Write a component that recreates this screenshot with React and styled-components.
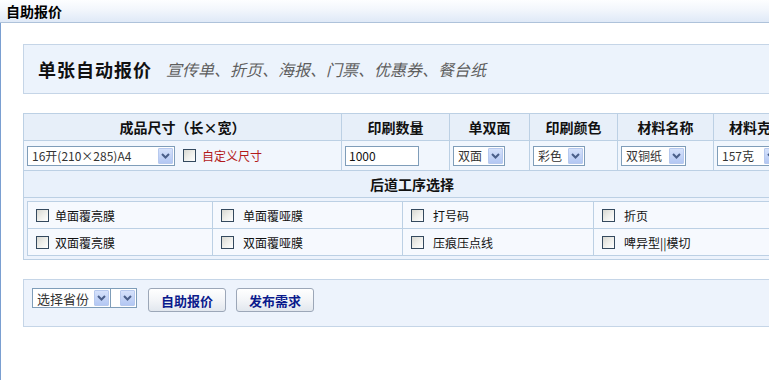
import React from "react";
import styled, { createGlobalStyle } from "styled-components";

const FONT = `"SimSun", "Noto Sans CJK SC", "Liberation Sans", sans-serif`;

const GlobalStyle = createGlobalStyle`
  html, body {
    margin: 0;
    padding: 0;
    background: #ffffff;
    overflow: hidden;
  }
  body {
    font-family: ${FONT};
    font-size: 12px;
    color: #222;
  }
`;

const Page = styled.div`
  width: 830px;
  height: 380px;
  display: flex;
  flex-direction: column;
`;

const TopBar = styled.div`
  height: 22px;
  border-bottom: 1px solid #aec2da;
  background: linear-gradient(#fdfeff 0%, #f2f6fc 45%, #dfe9f7 100%);
  display: flex;
  align-items: center;
  padding-left: 6px;
  font-size: 14px;
  font-weight: bold;
  color: #000;
`;

const Content = styled.div`
  flex: 1;
  border-left: 1px solid #7a9fd1;
  padding: 21px 30px 0 22px;
  display: flex;
  flex-direction: column;
  gap: 19px;
`;

const Intro = styled.div`
  height: 48px;
  border: 1px solid #c5d5e7;
  background: #ecf3fc;
  display: flex;
  align-items: center;
  padding-left: 14px;
  gap: 14px;
`;

const IntroTitle = styled.span`
  font-size: 18px;
  font-weight: bold;
  color: #111;
  letter-spacing: 1px;
`;

const IntroNote = styled.span`
  font-size: 16px;
  font-style: italic;
  color: #5e5e5e;
`;

const Table = styled.table`
  width: 777px;
  border-collapse: collapse;
  table-layout: fixed;
  border: 1px solid #bcd0e4;
`;

const HeadCell = styled.th`
  height: 26px;
  padding: 0;
  border: 1px solid #bcd0e4;
  background: #e7eff9;
  font-size: 14px;
  font-weight: bold;
  color: #111;
  text-align: center;
  white-space: nowrap;
`;

const FieldCell = styled.td`
  height: 29px;
  padding: 0 0 0 3px;
  border: 1px solid #bcd0e4;
  background: #f1f6fd;
  white-space: nowrap;
  overflow: hidden;
`;

const FieldRow = styled.div`
  display: flex;
  align-items: center;
  gap: 8px;
`;

const SectionCell = styled.td`
  height: 26px;
  padding: 0;
  border: 1px solid #bcd0e4;
  background: #e9f1fb;
  font-size: 14px;
  font-weight: bold;
  text-align: center;
  color: #111;
`;

const WrapCell = styled.td`
  padding: 3px 4px 3px 3px;
  border: 1px solid #bcd0e4;
  background: #edf3fc;
`;

const InnerTable = styled.table`
  width: 769px;
  border-collapse: collapse;
  table-layout: fixed;
  border: 1px solid #bcd0e4;
`;

const OptionCell = styled.td`
  height: 26px;
  padding: 0 0 0 8px;
  border: 1px solid #bcd0e4;
  background: #f6f9fe;
  white-space: nowrap;
`;

const Option = styled.label`
  display: flex;
  align-items: center;
  gap: ${({ $tight }) => ($tight ? "6px" : "9px")};
  font-size: 12px;
  color: #111;
`;

const Check = styled.span`
  width: 11px;
  height: 11px;
  border: 1px solid #34495e;
  background: linear-gradient(135deg, #d8d8d2 0%, #eeeeea 50%, #ffffff 100%);
  flex-shrink: 0;
`;

const RedLabel = styled.span`
  color: #b3191a;
  font-size: 12px;
  margin-left: -2px;
`;

const SelectBox = styled.div`
  width: ${({ $w }) => $w}px;
  height: 20px;
  box-sizing: border-box;
  border: 1px solid #7f9db9;
  background: #fff;
  display: flex;
  align-items: center;
  justify-content: space-between;
  padding: 0 1px 0 4px;
  font-size: ${({ $size }) => $size || 12}px;
  color: #333;
  white-space: nowrap;
  overflow: hidden;
`;

const ArrowBtn = styled.span`
  width: 15px;
  height: 16px;
  box-sizing: border-box;
  border: 1px solid #b7c9ee;
  border-radius: 1px;
  background: linear-gradient(#d6e2fb, #b3c7f3);
  display: flex;
  align-items: center;
  justify-content: center;
  flex-shrink: 0;
  margin-left: 4px;
`;

const TextInput = styled.div`
  width: 74px;
  height: 20px;
  box-sizing: border-box;
  border: 1px solid #7f9db9;
  background: #fff;
  padding-left: 3px;
  display: flex;
  align-items: center;
  font-size: 12px;
  color: #111;
`;

const Footer = styled.div`
  height: 38px;
  border: 1px solid #c5d5e7;
  background: #edf3fc;
  display: flex;
  align-items: flex-start;
  padding: 8px 0 0 8px;
`;

const SelectPair = styled.div`
  display: flex;
  margin-right: 11px;
`;

const Button = styled.button`
  width: 78px;
  height: 24px;
  margin-right: 10px;
  border: 1px solid #9ca7b8;
  border-radius: 3px;
  background: linear-gradient(#ffffff 0%, #f3f5f8 50%, #e2e7ee 100%);
  font-family: ${FONT};
  font-size: 13px;
  font-weight: bold;
  color: #0a1a8c;
  padding: 0;
`;

const Chevron = () => (
  <svg width="9" height="6" viewBox="0 0 9 6">
    <path d="M1 1 L4.5 4.5 L8 1" fill="none" stroke="#4a5f8a" strokeWidth="2" />
  </svg>
);

const Select = ({ width, size, children }) => (
  <SelectBox $w={width} $size={size}>
    <span>{children}</span>
    <ArrowBtn>
      <Chevron />
    </ArrowBtn>
  </SelectBox>
);

const options = [
  ["单面覆亮膜", "单面覆哑膜", "打号码", "折页"],
  ["双面覆亮膜", "双面覆哑膜", "压痕压点线", "啤异型||模切"],
];

export default function App() {
  return (
    <Page>
      <GlobalStyle />
      <TopBar>自助报价</TopBar>
      <Content>
        <Intro>
          <IntroTitle>单张自动报价</IntroTitle>
          <IntroNote>宣传单、折页、海报、门票、优惠券、餐台纸</IntroNote>
        </Intro>

        <Table>
          <colgroup>
            <col style={{ width: 318 }} />
            <col style={{ width: 108 }} />
            <col style={{ width: 80 }} />
            <col style={{ width: 88 }} />
            <col style={{ width: 96 }} />
            <col style={{ width: 87 }} />
          </colgroup>
          <tbody>
            <tr>
              <HeadCell>成品尺寸（长×宽）</HeadCell>
              <HeadCell>印刷数量</HeadCell>
              <HeadCell>单双面</HeadCell>
              <HeadCell>印刷颜色</HeadCell>
              <HeadCell>材料名称</HeadCell>
              <HeadCell>材料克重</HeadCell>
            </tr>
            <tr>
              <FieldCell>
                <FieldRow>
                  <Select width={148}>16开(210×285)A4</Select>
                  <Check />
                  <RedLabel>自定义尺寸</RedLabel>
                </FieldRow>
              </FieldCell>
              <FieldCell>
                <TextInput>1000</TextInput>
              </FieldCell>
              <FieldCell>
                <Select width={52}>双面</Select>
              </FieldCell>
              <FieldCell>
                <Select width={52}>彩色</Select>
              </FieldCell>
              <FieldCell>
                <Select width={65}>双铜纸</Select>
              </FieldCell>
              <FieldCell>
                <Select width={64}>157克</Select>
              </FieldCell>
            </tr>
            <tr>
              <SectionCell colSpan={6}>后道工序选择</SectionCell>
            </tr>
            <tr>
              <WrapCell colSpan={6}>
                <InnerTable>
                  <colgroup>
                    <col style={{ width: 185 }} />
                    <col style={{ width: 190 }} />
                    <col style={{ width: 191 }} />
                    <col style={{ width: 203 }} />
                  </colgroup>
                  <tbody>
                    {options.map((row, r) => (
                      <tr key={r}>
                        {row.map((name, c) => (
                          <OptionCell key={name}>
                            <Option $tight={c === 0}>
                              <Check />
                              {name}
                            </Option>
                          </OptionCell>
                        ))}
                      </tr>
                    ))}
                  </tbody>
                </InnerTable>
              </WrapCell>
            </tr>
          </tbody>
        </Table>

        <Footer>
          <SelectPair>
            <Select width={79} size={13}>选择省份</Select>
            <SelectBox $w={27} style={{ marginLeft: -1 }}>
              <span />
              <ArrowBtn>
                <Chevron />
              </ArrowBtn>
            </SelectBox>
          </SelectPair>
          <Button>自助报价</Button>
          <Button>发布需求</Button>
        </Footer>
      </Content>
    </Page>
  );
}
